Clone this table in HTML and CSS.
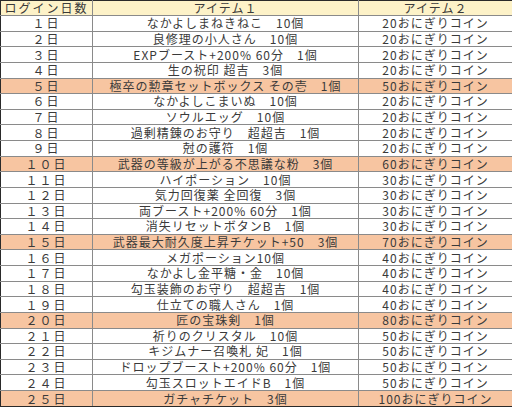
FILE: index.html
```html
<!DOCTYPE html>
<html lang="ja">
<head>
<meta charset="utf-8">
<link rel="stylesheet" href="styles.css">
</head>
<body>
<table class="login-table">
  <colgroup>
    <col class="c-day">
    <col class="c-item1">
    <col class="c-item2">
  </colgroup>
  <thead>
    <tr class="head">
      <th class="day-h">ログイン日数</th>
      <th>アイテム１</th>
      <th>アイテム２</th>
    </tr>
  </thead>
  <tbody>
    <tr><td class="day">１日</td><td>なかよしまねきねこ　10個</td><td>20おにぎりコイン</td></tr>
    <tr><td class="day">２日</td><td>良修理の小人さん　10個</td><td>20おにぎりコイン</td></tr>
    <tr><td class="day">３日</td><td>EXPブースト+200% 60分　1個</td><td>20おにぎりコイン</td></tr>
    <tr><td class="day">４日</td><td>生の祝印 超吉　3個</td><td>20おにぎりコイン</td></tr>
    <tr class="hl"><td class="day">５日</td><td>極卒の勲章セットボックス その壱　1個</td><td>50おにぎりコイン</td></tr>
    <tr><td class="day">６日</td><td>なかよしこまいぬ　10個</td><td>20おにぎりコイン</td></tr>
    <tr><td class="day">７日</td><td>ソウルエッグ　10個</td><td>20おにぎりコイン</td></tr>
    <tr><td class="day">８日</td><td>過剰精錬のお守り　超超吉　1個</td><td>20おにぎりコイン</td></tr>
    <tr><td class="day">９日</td><td>尅の護符　1個</td><td>20おにぎりコイン</td></tr>
    <tr class="hl"><td class="day">１０日</td><td>武器の等級が上がる不思議な粉　3個</td><td>60おにぎりコイン</td></tr>
    <tr><td class="day">１１日</td><td>ハイポーション　10個</td><td>30おにぎりコイン</td></tr>
    <tr><td class="day">１２日</td><td>気力回復薬 全回復　3個</td><td>30おにぎりコイン</td></tr>
    <tr><td class="day">１３日</td><td>両ブースト+200% 60分　1個</td><td>30おにぎりコイン</td></tr>
    <tr><td class="day">１４日</td><td>消失リセットボタンB　1個</td><td>30おにぎりコイン</td></tr>
    <tr class="hl"><td class="day">１５日</td><td>武器最大耐久度上昇チケット+50　3個</td><td>70おにぎりコイン</td></tr>
    <tr><td class="day">１６日</td><td>メガポーション10個</td><td>40おにぎりコイン</td></tr>
    <tr><td class="day">１７日</td><td>なかよし金平糖・金　10個</td><td>40おにぎりコイン</td></tr>
    <tr><td class="day">１８日</td><td>勾玉装飾のお守り　超超吉　1個</td><td>40おにぎりコイン</td></tr>
    <tr><td class="day">１９日</td><td>仕立ての職人さん　1個</td><td>40おにぎりコイン</td></tr>
    <tr class="hl"><td class="day">２０日</td><td>匠の宝珠剣　1個</td><td>80おにぎりコイン</td></tr>
    <tr><td class="day">２１日</td><td>祈りのクリスタル　10個</td><td>50おにぎりコイン</td></tr>
    <tr><td class="day">２２日</td><td>キジムナー召喚札 妃　1個</td><td>50おにぎりコイン</td></tr>
    <tr><td class="day">２３日</td><td>ドロップブースト+200% 60分　1個</td><td>50おにぎりコイン</td></tr>
    <tr><td class="day">２４日</td><td>勾玉スロットエイドB　1個</td><td>50おにぎりコイン</td></tr>
    <tr class="hl"><td class="day">２５日</td><td>ガチャチケット　3個</td><td>100おにぎりコイン</td></tr>
  </tbody>
</table>
</body>
</html>
```
FILE: styles.css
```css
html, body {
  margin: 0;
  padding: 0;
  background: #ffffff;
}

.login-table {
  width: 512px;
  height: 407px;
  border-collapse: collapse;
  table-layout: fixed;
  font-family: "Noto Sans CJK JP", "Noto Sans", sans-serif;
  font-size: 12px;
  line-height: 14px;
  color: #3a3a3a;
  border: 1px solid #2a2a2a;
}

.c-day { width: 92px; }
.c-item1 { width: 266px; }
.c-item2 { width: 154px; }

.login-table th,
.login-table td {
  padding: 0;
  text-align: center;
  white-space: nowrap;
  border: 1px solid #8a8a8a;
  vertical-align: middle;
  letter-spacing: 1px;
}

.login-table th {
  font-weight: normal;
  background: #fdf2c8;
}

.login-table th.day-h {
  letter-spacing: 2px;
}

.login-table td.day {
  letter-spacing: 2px;
}

.login-table tr.hl td {
  background: #f7c5a1;
}

.login-table tr > :first-child { border-left: 1px solid #2a2a2a; }
.login-table tr > :last-child { border-right: 1px solid #2a2a2a; }
.login-table thead th { border-top: 1px solid #2a2a2a; }
.login-table tbody tr:last-child td { border-bottom: 1px solid #2a2a2a; }
```
